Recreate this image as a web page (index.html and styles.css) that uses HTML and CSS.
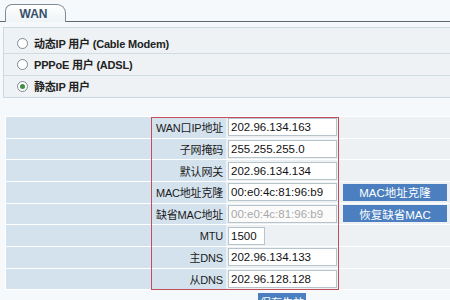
FILE: index.html
```html
<!DOCTYPE html>
<html lang="zh-CN">
<head>
    <meta charset="UTF-8">
    <title>WAN</title>
    <link rel="stylesheet" href="styles.css">
</head>
<body>
    <div id="tabs">
        <div class="tab">WAN</div>
    </div>

    <div id="modeBox">
        <div class="mode"><span class="radio"></span>动态IP 用户 (Cable Modem)</div>
        <div class="mode"><span class="radio"></span>PPPoE 用户 (ADSL)</div>
        <div class="mode"><span class="radio on"></span>静态IP 用户</div>
    </div>

    <div id="formWrap">
        <div class="row">
            <div class="side"></div>
            <div class="label">WAN口IP地址</div>
            <div class="field"><input class="ip" value="202.96.134.163"></div>
            <div class="extra"></div>
        </div>
        <div class="row">
            <div class="side"></div>
            <div class="label">子网掩码</div>
            <div class="field"><input class="ip" value="255.255.255.0"></div>
            <div class="extra"></div>
        </div>
        <div class="row">
            <div class="side"></div>
            <div class="label">默认网关</div>
            <div class="field"><input class="ip" value="202.96.134.134"></div>
            <div class="extra"></div>
        </div>
        <div class="row">
            <div class="side"></div>
            <div class="label">MAC地址克隆</div>
            <div class="field"><input class="ip" value="00:e0:4c:81:96:b9"></div>
            <div class="extra"><div class="btn">MAC地址克隆</div></div>
        </div>
        <div class="row">
            <div class="side"></div>
            <div class="label">缺省MAC地址</div>
            <div class="field"><input class="ip" value="00:e0:4c:81:96:b9" disabled></div>
            <div class="extra"><div class="btn">恢复缺省MAC</div></div>
        </div>
        <div class="row">
            <div class="side"></div>
            <div class="label">MTU</div>
            <div class="field"><input class="mtu" value="1500"></div>
            <div class="extra"></div>
        </div>
        <div class="row">
            <div class="side"></div>
            <div class="label">主DNS</div>
            <div class="field"><input class="ip" value="202.96.134.133"></div>
            <div class="extra"></div>
        </div>
        <div class="row">
            <div class="side"></div>
            <div class="label">从DNS</div>
            <div class="field"><input class="ip" value="202.96.128.128"></div>
            <div class="extra"></div>
        </div>

        <div id="mark"></div>
    </div>

    <div id="footer">
        <div class="saveBtn">保存生效</div>
    </div>
</body>
</html>
```

FILE: styles.css
```css
*{
    margin: 0;
    padding: 0;
    box-sizing: border-box;
}

body{
    background-color: #f6f9fb;
    font-family: "Liberation Sans", "Noto Sans CJK SC", sans-serif;
    font-size: 11px;
    color: #1e1e1e;
    width: 450px;
    overflow: hidden;
}

#tabs{
    height: 22px;
    padding-left: 5px;
    display: flex;
    align-items: flex-end;
    border-bottom: 1px solid #5e6a72;
}

.tab{
    width: 61px;
    height: 18px;
    margin-bottom: -1px;
    border: 1px solid #7f8c94;
    border-bottom: none;
    border-radius: 7px 9px 0 0;
    background: linear-gradient(#ffffff, #eef3f6);
    color: #35506a;
    font-weight: bold;
    font-size: 12px;
    display: flex;
    justify-content: center;
    align-items: center;
    padding-right: 4px;
}

#modeBox{
    margin: 5px 0 0 3px;
    padding-top: 5px;
    border: 1px solid #cbd9e0;
    border-right: none;
    background-color: #eef2f4;
}

.mode{
    height: 21.3px;
    display: flex;
    align-items: center;
    gap: 6px;
    padding-left: 13px;
    font-weight: bold;
    font-size: 11px;
    letter-spacing: -0.2px;
    color: #222;
    border-bottom: 1px solid #cfdde3;
    white-space: nowrap;
}

.mode:last-child{
    border-bottom: none;
}

.radio{
    flex: none;
    width: 11px;
    height: 11px;
    border-radius: 50%;
    border: 1px solid #7d8b95;
    background-color: #fff;
    display: flex;
    justify-content: center;
    align-items: center;
}

.radio.on::after{
    content: "";
    width: 5px;
    height: 5px;
    border-radius: 50%;
    background-color: #3f8f45;
}

#formWrap{
    position: relative;
    margin: 18px 0 0 5px;
    border-top: 1px solid #ffffff;
}

.row{
    height: 21.7px;
    display: flex;
    border-bottom: 1px solid #ffffff;
}

.side{
    width: 146px;
    background-color: #d4e2ee;
    border-left: 1px solid #ffffff;
}

.label{
    width: 75px;
    background-color: #d4e2ee;
    display: flex;
    justify-content: flex-end;
    align-items: center;
    padding-right: 3px;
    color: #1a1a1a;
    white-space: nowrap;
    letter-spacing: -0.2px;
}

.field{
    width: 112px;
    background-color: #eef1f3;
    display: flex;
    align-items: center;
    padding-left: 2px;
}

.extra{
    flex: 1;
    background-color: #eef1f3;
    display: flex;
    align-items: center;
    padding-left: 5px;
}

input{
    height: 18px;
    border: 1px solid #b8c4cc;
    background-color: #ffffff;
    font-family: "Liberation Sans", sans-serif;
    font-size: 11.5px;
    color: #111;
    padding: 0 2px;
    outline: none;
}

.ip{
    width: 109px;
}

.mtu{
    width: 37px;
}

input:disabled{
    color: #a8a8a8;
    background-color: #fbfbfb;
}

.btn{
    width: 104px;
    height: 17px;
    background-color: #4b7fbf;
    color: #ffffff;
    font-size: 11.5px;
    display: flex;
    justify-content: center;
    align-items: center;
    white-space: nowrap;
}

#mark{
    position: absolute;
    left: 146px;
    top: 0;
    width: 188px;
    height: 173px;
    border: 1.5px solid #c24e5a;
    pointer-events: none;
}

#footer{
    padding: 3px 0 0 258px;
}

.saveBtn{
    width: 48px;
    height: 18px;
    background-color: #4b7fbf;
    color: #ffffff;
    display: flex;
    justify-content: center;
    align-items: center;
    white-space: nowrap;
}
```
